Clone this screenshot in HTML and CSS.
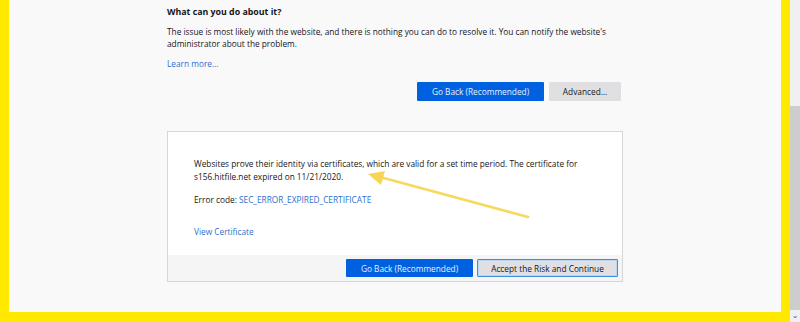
FILE: index.html
```html
<!DOCTYPE html>
<html lang="en">
<head>
    <meta charset="UTF-8">
    <title>Warning: Potential Security Risk Ahead</title>
    <link rel="stylesheet" href="styles.css">
</head>
<body>
    <div class="window">
        <!-- Page frame -->
        <div class="frame">
            <div class="column">
                <h2>What can you do about it?</h2>
                <p>The issue is most likely with the website, and there is nothing you can do to resolve it. You can notify the website's administrator about the problem.</p>
                <a class="link" href="#">Learn more…</a>

                <div class="actions">
                    <button class="btn primary">Go Back (Recommended)</button>
                    <button class="btn">Advanced…</button>
                </div>

                <!-- Advanced panel -->
                <div class="panel">
                    <div class="panel-body">
                        <p>Websites prove their identity via certificates, which are valid for a set time period. The certificate for s156.hitfile.net expired on 11/21/2020.</p>
                        <p class="code">Error code: <a class="link" href="#">SEC_ERROR_EXPIRED_CERTIFICATE</a></p>
                        <a class="link cert" href="#">View Certificate</a>
                    </div>
                    <div class="panel-foot">
                        <button class="btn primary">Go Back (Recommended)</button>
                        <button class="btn focus">Accept the Risk and Continue</button>
                    </div>
                </div>
            </div>

            <!-- Annotation arrow -->
            <svg class="arrow" width="790" height="312" viewBox="0 0 790 312">
                <line x1="528" y1="217" x2="380" y2="177" stroke="#f8d44c" stroke-width="2.6" stroke-linecap="round" opacity="0.9"/>
                <polygon points="368,174 385,171 381,185" fill="#f8d44c" opacity="0.95"/>
            </svg>
        </div>

        <!-- Scrollbar -->
        <div class="scrollbar">
            <div class="thumb"></div>
            <div class="down">&#8964;</div>
        </div>
    </div>
</body>
</html>
```

FILE: styles.css
```css
body {
    margin: 0;
    padding: 0;
    font-family: 'Open Sans', 'Noto Sans', sans-serif;
    color: #15141a;
    background: #ffe900;
}
.window {
    display: flex;
    width: 800px;
    height: 322px;
    overflow: hidden;
}
.frame {
    position: relative;
    flex: none;
    width: 772px;
    height: 312px;
    background: #f9f9fa;
    border-left: 9px solid #ffe900;
    border-right: 9px solid #ffe900;
    border-bottom: 10px solid #ffe900;
}
.column {
    width: 456px;
    margin: 0 auto;
    padding-top: 6px;
    font-size: 8.3px;
}
h2 {
    margin: 0;
    font-size: 8.8px;
    line-height: 12px;
    font-weight: 700;
}
p {
    margin: 8px 0 0;
    line-height: 12px;
}
.link {
    color: #2d70cc;
    text-decoration: none;
}
.column > .link {
    display: block;
    margin-top: 8px;
    line-height: 12px;
}
.actions {
    display: flex;
    justify-content: flex-end;
    gap: 5px;
    margin: 12px 2px 0 0;
}
.btn {
    font-family: inherit;
    font-size: 8.3px;
    color: #15141a;
    background: #e0e0e2;
    border: 0;
    border-radius: 1px;
    height: 19px;
    padding: 0;
    white-space: nowrap;
}
.actions .btn.primary {
    width: 127px;
}
.actions .btn:last-child {
    width: 72px;
}
.btn.primary {
    background: #0061e0;
    color: #e6efff;
}
.panel {
    margin-top: 30px;
    background: #ffffff;
    border: 1px solid #d7d7db;
}
.panel-body {
    padding: 25px 26px 17px;
}
.panel-body p {
    margin: 0;
    line-height: 13px;
}
.panel-body p.code {
    margin-top: 10px;
}
.panel-body .cert {
    display: block;
    margin-top: 19px;
    line-height: 13px;
}
.panel-foot {
    display: flex;
    justify-content: flex-end;
    align-items: center;
    gap: 4px;
    height: 26px;
    padding-right: 4px;
    background: #f5f5f6;
}
.panel-foot .btn {
    height: 18px;
}
.panel-foot .btn.primary {
    width: 127px;
}
.panel-foot .btn.focus {
    width: 141px;
    border: 1px solid #3f8ee6;
    box-shadow: inset 0 0 0 1px #b9d6f6;
}
.arrow {
    position: absolute;
    left: -9px;
    top: 0;
    pointer-events: none;
}
.scrollbar {
    position: relative;
    flex: none;
    width: 10px;
    height: 322px;
    background: #f0f0f0;
}
.thumb {
    position: absolute;
    left: 0;
    top: 106px;
    width: 10px;
    height: 204px;
    background: #cdcdcd;
}
.down {
    position: absolute;
    left: 0;
    bottom: 1px;
    width: 10px;
    text-align: center;
    font-size: 8px;
    line-height: 10px;
    color: #555;
    font-family: 'DejaVu Sans', sans-serif;
}
```
